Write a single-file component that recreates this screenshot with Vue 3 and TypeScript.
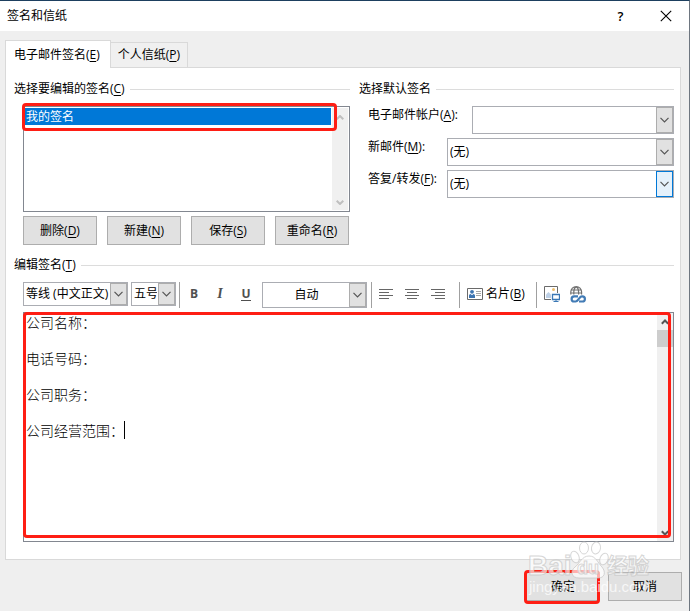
<script setup lang="ts">
import { ref } from 'vue'

interface Action { label: string; key: string }

const signatures = ['我的签名']
const selected = ref(0)
const actions: Action[] = [
  { label: '删除', key: 'D' },
  { label: '新建', key: 'N' },
  { label: '保存', key: 'S' },
  { label: '重命名', key: 'R' },
]
const defaults = [
  { id: 'account', label: '电子邮件帐户', key: 'A', value: '', short: true, hot: false },
  { id: 'newmail', label: '新邮件', key: 'M', value: '(无)', short: false, hot: false },
  { id: 'reply', label: '答复/转发', key: 'F', value: '(无)', short: false, hot: true },
]
const aligns = [
  { name: '左对齐', d: 'M0 .5h14M0 3.5h10M0 6.5h14M0 9.5h10' },
  { name: '居中', d: 'M0 .5h14M2 3.5h10M0 6.5h14M2 9.5h10' },
  { name: '右对齐', d: 'M0 .5h14M4 3.5h10M0 6.5h14M4 9.5h10' },
]
const body = ref('公司名称：\n\n电话号码：\n\n公司职务：\n\n公司经营范围：')
</script>

<template>
  <div class="dialog">
    <header class="title">
      <h1>签名和信纸</h1>
      <button class="cap" aria-label="帮助">?</button>
      <button class="cap" aria-label="关闭">
        <svg width="12" height="12" viewBox="0 0 12 12"><path d="M.8.8l10.4 10.4M11.2.8L.8 11.2" stroke="#000" stroke-width="1.1" fill="none" /></svg>
      </button>
    </header>

    <nav class="tabs" role="tablist">
      <button class="tab active" role="tab" aria-selected="true">电子邮件签名(<u>E</u>)</button>
      <button class="tab" role="tab" aria-selected="false">个人信纸(<u>P</u>)</button>
    </nav>

    <main class="panel">
      <div class="columns">
        <section class="choose">
          <h2 class="legend"><span>选择要编辑的签名(<u>C</u>)</span></h2>
          <div class="list">
            <ul role="listbox" aria-label="签名">
              <li v-for="(s, i) in signatures" :key="s" role="option" :aria-selected="i === selected" :class="{ on: i === selected }" @click="selected = i">{{ s }}</li>
            </ul>
            <div class="track light">
              <svg width="8" height="5" viewBox="0 0 8 5"><path d="M.7 4.3L4 1l3.3 3.3" /></svg>
              <svg width="8" height="5" viewBox="0 0 8 5"><path d="M.7.7L4 4 7.3.7" /></svg>
            </div>
            <div class="mark mark-list"></div>
          </div>
          <div class="actions">
            <button v-for="a in actions" :key="a.key" class="btn">{{ a.label }}(<u>{{ a.key }}</u>)</button>
          </div>
        </section>

        <section class="defaults">
          <h2 class="legend"><span>选择默认签名</span></h2>
          <div v-for="d in defaults" :key="d.id" class="field" :class="{ short: d.short }">
            <label :for="d.id">{{ d.label }}(<u>{{ d.key }}</u>):</label>
            <div class="combo" :class="{ hot: d.hot }">
              <select :id="d.id"><option>{{ d.value }}</option></select>
              <span class="arrow"><svg width="9" height="6" viewBox="0 0 9 6"><path d="M.5.8l4 4 4-4" /></svg></span>
            </div>
          </div>
        </section>
      </div>

      <section class="edit">
        <h2 class="legend"><span>编辑签名(<u>T</u>)</span></h2>
        <div class="toolbar">
          <div class="combo font">
            <select aria-label="字体"><option>等线 (中文正文)</option></select>
            <span class="arrow"><svg width="9" height="6" viewBox="0 0 9 6"><path d="M.5.8l4 4 4-4" /></svg></span>
          </div>
          <div class="combo size">
            <select aria-label="字号"><option>五号</option></select>
            <span class="arrow"><svg width="9" height="6" viewBox="0 0 9 6"><path d="M.5.8l4 4 4-4" /></svg></span>
          </div>
          <i class="sep"></i>
          <div class="styles">
            <button class="tool" aria-label="加粗"><b>B</b></button>
            <button class="tool" aria-label="倾斜"><em>I</em></button>
            <button class="tool" aria-label="下划线"><b class="under">U</b></button>
          </div>
          <div class="combo color">
            <select aria-label="字体颜色"><option>自动</option></select>
            <span class="arrow"><svg width="9" height="6" viewBox="0 0 9 6"><path d="M.5.8l4 4 4-4" /></svg></span>
          </div>
          <i class="sep"></i>
          <div class="aligns">
            <button v-for="a in aligns" :key="a.name" class="tool" :aria-label="a.name">
              <svg width="14" height="10" viewBox="0 0 14 10"><path :d="a.d" stroke="#666" fill="none" /></svg>
            </button>
          </div>
          <i class="sep"></i>
          <button class="card">
            <svg width="16" height="12" viewBox="0 0 16 12">
              <path d="M.5.5h15v11H.5z" fill="#fff" stroke="#6a6a6a" />
              <circle cx="5" cy="3.8" r="1.9" fill="#3b73b0" />
              <path d="M2 10V7.5Q2 6 3.6 6L5 7.2 6.4 6Q8 6 8 7.5V10z" fill="#3b73b0" />
              <path d="M9 3.5h5M9 5.5h5M9 7.5h5" stroke="#a6a6a6" />
            </svg>
            <span>名片(<u>B</u>)</span>
          </button>
          <i class="sep"></i>
          <div class="inserts">
            <button class="tool" aria-label="插入图片">
              <svg width="16" height="17" viewBox="0 0 16 17">
                <path d="M7 13.5H.5V.5h13V7" fill="none" stroke="#6a6a6a" />
                <path d="M2 12V8.5L4.5 6 7 8.5V12z" fill="#bdd0e6" />
                <circle cx="9.5" cy="3.6" r="1.5" fill="#eebd6b" />
                <path d="M8.5 8.5h7v5h-7z" fill="#fff" stroke="#3b78b5" stroke-width="1.3" />
                <path d="M12 13.5v2M9.5 15.5h5" stroke="#3b78b5" fill="none" />
              </svg>
            </button>
            <button class="tool" aria-label="插入超链接">
              <svg width="16" height="17" viewBox="0 0 16 17">
                <g fill="none" stroke="#707070" stroke-width="1.2"><path d="M.8 8.5V6a5.4 5.4 0 0 1 10.8 0v2.5M3.8 8.5V6q0-4 2.4-5.2Q8.6 2 8.6 6v2.5M1 4h10.4M.8 7h10.8" /></g>
                <g fill="none" stroke="#427bb5" stroke-width="2.2"><path d="M8 10.3H4.2a2.6 2.6 0 0 0 0 5.2h1.4q1.4 0 2.4-1.6l1.6-2q1-1.6 2.4-1.6h.3a2.6 2.6 0 0 1 0 5.2H9" /></g>
              </svg>
            </button>
          </div>
        </div>

        <div class="editor">
          <textarea v-model="body" aria-label="签名内容"></textarea>
          <div class="track dark">
            <svg width="8" height="6" viewBox="0 0 8 6"><path d="M.8 4.8L4 1.5l3.2 3.3" /></svg>
            <span class="thumb"></span>
            <svg width="8" height="6" viewBox="0 0 8 6"><path d="M.8 1.2L4 4.5l3.2-3.3" /></svg>
          </div>
          <i class="caret"></i>
          <div class="mark mark-editor"></div>
        </div>
      </section>
    </main>

    <footer class="foot">
      <div class="ok"><button class="btn">确定</button><div class="mark mark-ok"></div></div>
      <button class="btn">取消</button>
    </footer>

    <div class="watermark" aria-hidden="true">
      <svg width="130" height="68" viewBox="0 0 130 68">
        <g fill="#fff" fill-opacity=".65" stroke="#c4c4c4" stroke-opacity=".7">
          <ellipse cx="48" cy="18" rx="4" ry="6" transform="rotate(-20 48 18)" />
          <ellipse cx="57" cy="9" rx="4.5" ry="6" />
          <ellipse cx="69" cy="9" rx="4.5" ry="6" transform="rotate(10 69 9)" />
          <ellipse cx="77" cy="20" rx="4" ry="6" transform="rotate(20 77 20)" />
          <path d="M62 17c7 0 8 6 13 11 4 5 3 11-4 11H52c-8 0-9-7-4-11 5-4 7-11 14-11z" />
        </g>
        <g class="wm-text">
          <text x="1" y="36" font-size="28" font-weight="700">Bai</text>
          <text x="50" y="35" font-size="18" font-weight="700">du</text>
          <text x="80" y="34" font-size="21" font-weight="700">经验</text>
          <text class="url" x="2" y="53" font-size="15">jingyan.baidu.com</text>
        </g>
      </svg>
    </div>
  </div>
</template>

<style>
body { margin: 0; }
</style>

<style scoped>
* { box-sizing: border-box; }
.dialog {
  position: relative;
  display: flex;
  flex-direction: column;
  min-height: 100vh;
  background: #efefef;
  border-top: 1px solid #1d3f5f;
  border-right: 1px solid #6e7680;
  font: 12px/16px "Open Sans", "Noto Sans CJK SC", sans-serif;
  color: #000;
}
button, select, textarea { font: inherit; color: inherit; margin: 0; }
button { padding: 0; border: 0; background: none; }
u { text-underline-offset: 2px; }
.title { display: flex; align-items: center; height: 30px; padding: 0 1px 0 7px; background: #fff; }
h1 { flex: 1; margin: 0; font: inherit; }
.cap { display: flex; align-items: center; justify-content: center; width: 45px; height: 28px; font-size: 13px; font-weight: 600; }
.tabs { display: flex; align-items: flex-end; height: 36px; padding-left: 5px; }
.tab { height: 25px; padding: 0 7px; background: #f0f0f0; border: 1px solid #d9d9d9; border-bottom: 0; border-left: 0; }
.tab.active { position: relative; height: 28px; margin-bottom: -1px; padding: 0 10px 0 8px; background: #fff; border-left: 1px solid #d9d9d9; }
.panel {
  flex: 1;
  display: flex;
  flex-direction: column;
  margin: 0 8px 0 5px;
  padding: 12px 6px 17px 8px;
  background: #fff;
  border: 1px solid #d9d9d9;
}
.columns { display: grid; grid-template-columns: 336fr 315fr; gap: 9px; }
.legend { display: flex; align-items: center; gap: 5px; height: 18px; margin: 0; font: inherit; }
.legend::after { content: ""; flex: 1; height: 1px; background: #dcdcdc; }
.list { position: relative; display: flex; height: 106px; margin: 8px 0 0 9px; padding: 1px; border: 1px solid #828790; background: #fff; }
ul { flex: 1; margin: 0 1px 0 0; padding: 0; list-style: none; }
li { height: 17px; padding-left: 1px; line-height: 17px; }
li.on { background: #0078d7; color: #fff; }
.track { display: flex; flex-direction: column; align-items: center; width: 16px; background: #f0f0f0; }
.track path { fill: none; stroke-width: 2; }
.light { justify-content: space-between; padding: 7px 0 5px; }
.light path { stroke: #bfbfbf; }
.mark { position: absolute; border: 3px solid #fe1e14; border-radius: 4px; pointer-events: none; }
.mark-list { inset: -4px 12px 80px -2px; }
.actions { display: grid; grid-template-columns: repeat(4, 1fr); gap: 10px; margin: 4px 1px 0 9px; }
.btn { height: 29px; background: #e1e1e1; border: 1px solid #adadad; }
.defaults .legend { margin-bottom: 8px; }
.field { display: flex; margin: 0 0 4px 9px; }
.field label { flex: 0 0 79px; padding-top: 1px; }
.field.short label { flex-basis: 104px; }
.combo { position: relative; flex: 1; display: flex; height: 28px; border: 1px solid #abadb3; background: #fff; }
.combo select { flex: 1; min-width: 0; width: 100%; padding: 0 18px 0 2px; border: 0; background: none; appearance: none; outline: 0; }
.arrow {
  position: absolute;
  inset: 0 0 0 auto;
  display: flex;
  align-items: center;
  justify-content: center;
  width: 17px;
  background: #e1e1e1;
  border: 1px solid #adadad;
  pointer-events: none;
}
.arrow path { fill: none; stroke: #555; stroke-width: 1.2; }
.hot .arrow { background: #e5f1fb; border-color: #0078d7; }
.edit { flex: 1; display: flex; flex-direction: column; margin-top: 11px; }
.toolbar { display: flex; align-items: flex-start; height: 26px; margin: 8px 0 0 9px; }
.toolbar .combo { flex: none; height: 24px; }
.toolbar .font { width: 105px; margin-right: 3px; }
.toolbar .size { width: 45px; margin-right: 3px; }
.toolbar .color { width: 105px; height: 26px; margin-right: 4px; }
.color select { text-align-last: center; }
.sep { width: 1px; height: 26px; background: #a0a0a0; }
.tool { display: flex; align-items: center; justify-content: center; width: 26px; height: 24px; color: #505050; }
.tool em { font-family: "Liberation Serif", serif; font-size: 14px; font-weight: 700; }
.under { border-bottom: 1px solid #505050; line-height: 12px; }
.styles { display: flex; margin: 0 3px 0 1px; }
.aligns { display: flex; margin: 0 8px 0 1px; }
.card { display: flex; align-items: center; gap: 3px; height: 24px; margin: 0 11px 0 7px; }
.inserts { display: flex; margin-left: 2px; }
.editor { position: relative; flex: 1; display: flex; min-height: 230px; margin: 4px 0 0 9px; border: 1px solid #828790; background: #fff; }
textarea {
  flex: 1;
  padding: 0 2px;
  border: 0;
  outline: 0;
  resize: none;
  overflow: hidden;
  background: none;
  color: #000;
  font: 300 14px/18px "Noto Sans CJK SC", sans-serif;
}
.dark { padding: 6px 0 5px; }
.dark path { stroke: #555; }
.thumb { width: 16px; height: 17px; margin: 5px 0 auto; background: #cdcdcd; }
.caret { position: absolute; left: 100px; top: 108px; width: 1px; height: 18px; background: #000; }
.mark-editor { inset: -1px 2px 3px -1px; }
.foot { display: flex; gap: 8px; justify-content: flex-end; height: 51px; padding: 12px 7px 0 0; }
.foot .btn { width: 74px; }
.ok { position: relative; height: 29px; }
.mark-ok { inset: -2px 0 -3px -2px; }
.watermark { position: absolute; right: 32px; bottom: 4px; height: 68px; pointer-events: none; }
.wm-text { fill: #fff; fill-opacity: .65; stroke: #c4c4c4; stroke-opacity: .7; stroke-width: 1; font-family: "Liberation Sans", "Noto Sans CJK SC", sans-serif; }
.wm-text .url { stroke: none; fill: #fff; fill-opacity: .75; }
</style>
